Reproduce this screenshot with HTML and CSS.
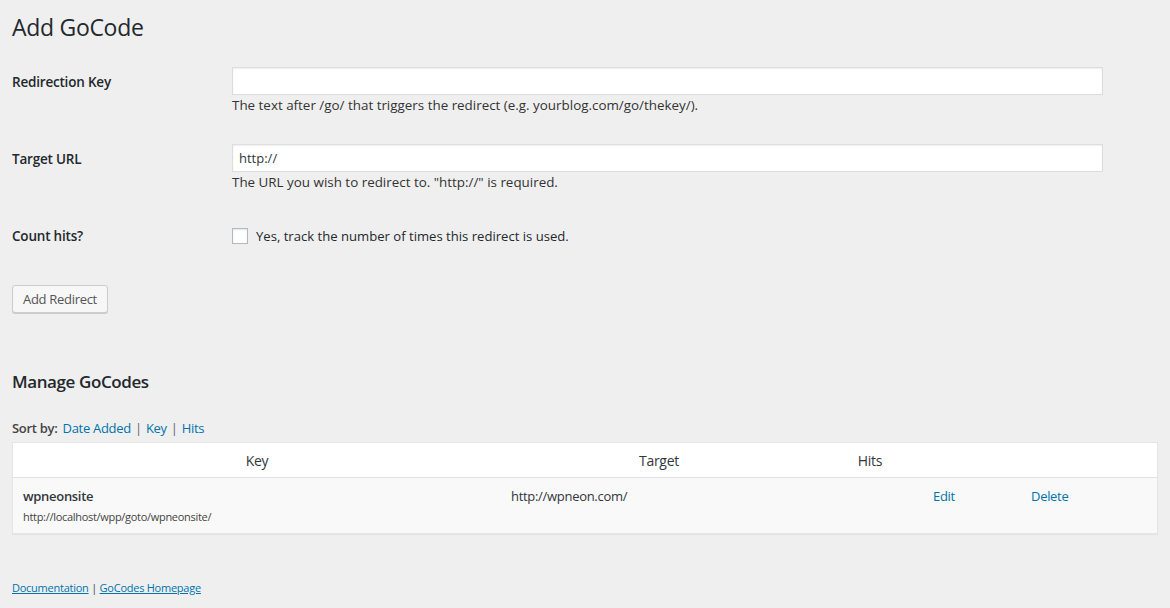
FILE: index.html
```html
<!DOCTYPE html>
<html>
<head>
<meta charset="utf-8">
<link rel="stylesheet" href="styles.css">
</head>
<body>
<div class="wrap">
  <h1 class="title">Add GoCode</h1>
  <div class="form">
    <div class="row">
      <div class="label">Redirection Key</div>
      <div class="field">
        <div class="input"></div>
        <div class="desc">The text after /go/ that triggers the redirect (e.g. yourblog.com/go/thekey/).</div>
      </div>
    </div>
    <div class="row">
      <div class="label">Target URL</div>
      <div class="field">
        <div class="input">http://</div>
        <div class="desc">The URL you wish to redirect to. "http://" is required.</div>
      </div>
    </div>
    <div class="row">
      <div class="label">Count hits?</div>
      <div class="field check">
        <span class="box"></span>
        <span>Yes, track the number of times this redirect is used.</span>
      </div>
    </div>
  </div>
  <div class="submit"><span class="button">Add Redirect</span></div>

  <h2 class="sub">Manage GoCodes</h2>
  <div class="sort"><span class="sortlabel">Sort by:</span> <a>Date Added</a> <span class="sep">|</span> <a>Key</a> <span class="sep">|</span> <a>Hits</a></div>

  <table class="list">
    <thead>
      <tr>
        <th class="c-key">Key</th>
        <th class="c-target">Target</th>
        <th class="c-hits">Hits</th>
        <th class="c-edit"></th>
        <th class="c-del"></th>
      </tr>
    </thead>
    <tbody>
      <tr>
        <td><div class="kname">wpneonsite</div><div class="kurl">http://localhost/wpp/goto/wpneonsite/</div></td>
        <td>http://wpneon.com/</td>
        <td></td>
        <td><a>Edit</a></td>
        <td><a>Delete</a></td>
      </tr>
    </tbody>
  </table>

  <div class="footer"><a>Documentation</a> | <a>GoCodes Homepage</a></div>
</div>
</body>
</html>
```

FILE: styles.css
```css
html, body {
  margin: 0;
  padding: 0;
  background: #efefef;
}
body {
  font-family: "Open Sans", "Noto Sans", sans-serif;
  font-size: 13px;
  color: #23282d;
}
.wrap {
  padding: 0 12px;
}
.title {
  margin: 0;
  padding: 13px 0 0;
  font-size: 23px;
  font-weight: 400;
  line-height: 29px;
  letter-spacing: -0.3px;
}
.form {
  margin-top: 10px;
}
.row {
  display: flex;
}
.label {
  width: 210px;
  flex: none;
  padding: 20px 0;
  line-height: 20px;
  font-size: 13.5px;
  font-weight: 600;
  letter-spacing: -0.2px;
}
.field {
  padding: 15px 10px;
}
.input {
  box-sizing: border-box;
  width: 871px;
  height: 28px;
  background: #fff;
  border: 1px solid #ddd;
  box-shadow: inset 0 1px 2px rgba(0,0,0,.07);
  padding: 3px 6px;
  line-height: 20px;
  font-size: 13px;
  color: #32373c;
}
.desc {
  margin-top: 1px;
  line-height: 18px;
  font-size: 13.4px;
  color: #333;
}
.check {
  display: flex;
  align-items: center;
  gap: 8px;
  padding-top: 20px;
  padding-bottom: 20px;
  line-height: 20px;
  font-size: 13.1px;
}
.box {
  width: 14px;
  height: 14px;
  border: 1px solid #b4b9be;
  background: #fff;
  box-shadow: inset 0 1px 2px rgba(0,0,0,.1);
}
.submit {
  margin-top: 19px;
}
.button {
  display: inline-block;
  box-sizing: border-box;
  height: 28px;
  line-height: 26px;
  padding: 0 10px;
  background: #f7f7f7;
  border: 1px solid #ccc;
  border-radius: 3px;
  box-shadow: 0 1px 0 #ccc;
  color: #555;
  font-size: 13px;
  letter-spacing: -0.3px;
}
.sub {
  margin: 57px 0 0;
  font-size: 17px;
  font-weight: 600;
  line-height: 24px;
  letter-spacing: -0.4px;
}
.sort {
  margin-top: 24px;
  line-height: 20px;
  color: #444;
  letter-spacing: -0.3px;
}
.sortlabel {
  font-weight: 600;
  margin-right: 2px;
}
.sep {
  color: #666;
  margin: 0 1px;
}
a {
  color: #0073aa;
}
.list {
  margin-top: 4px;
  width: 1146px;
  border-collapse: collapse;
  border: 1px solid #e5e5e5;
  box-shadow: 0 1px 1px rgba(0,0,0,.04);
  letter-spacing: -0.3px;
}
.list th {
  background: #fff;
  font-weight: 400;
  font-size: 14px;
  height: 34px;
  padding: 0;
  border-bottom: 1px solid #e1e1e1;
  color: #32373c;
}
.c-key { width: 488px; }
.c-target { width: 316px; }
.c-hits { width: 106px; }
.c-edit { width: 98px; }
.list td {
  background: #f9f9f9;
  vertical-align: top;
  padding: 8px 10px 6px;
  line-height: 20px;
  color: #32373c;
}
.kname {
  font-weight: 600;
}
.kurl {
  font-size: 11px;
  line-height: 21px;
  color: #444;
}
.footer {
  margin-top: 44px;
  font-size: 11px;
  line-height: 20px;
  color: #444;
  letter-spacing: -0.25px;
}
.footer a {
  text-decoration: underline;
}
```
